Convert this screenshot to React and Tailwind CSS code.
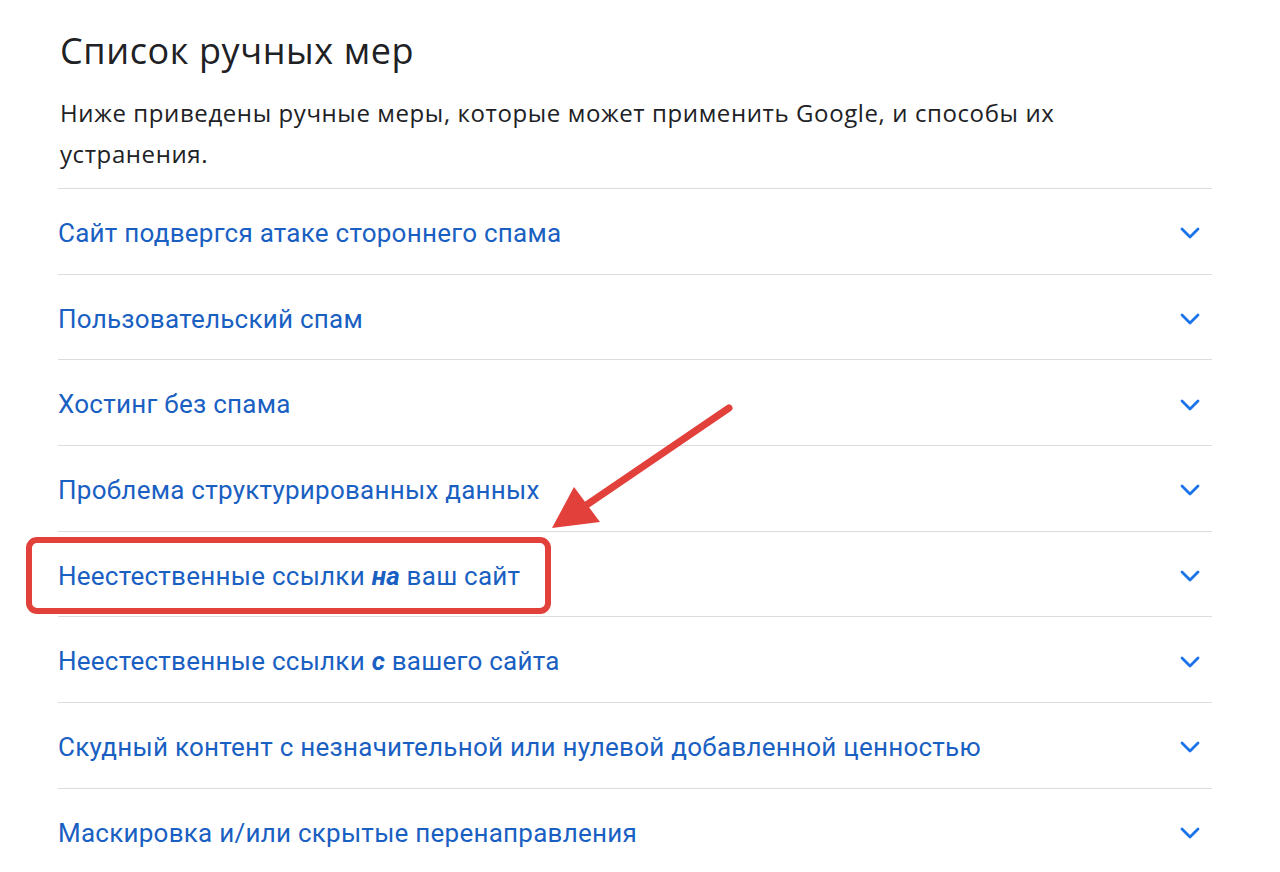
import React from "react";

const items = [
  ["Сайт подвергся атаке стороннего спама"],
  ["Пользовательский спам"],
  ["Хостинг без спама"],
  ["Проблема структурированных данных"],
  ["Неестественные ссылки ", "на", " ваш сайт"],
  ["Неестественные ссылки ", "с", " вашего сайта"],
  ["Скудный контент с незначительной или нулевой добавленной ценностью"],
  ["Маскировка и/или скрытые перенаправления"],
];

function Chevron() {
  return (
    <svg width="20" height="12" viewBox="0 0 20 12" fill="none">
      <path d="M2 2 L10 10 L18 2" stroke="#1a73e8" strokeWidth="2.8" strokeLinecap="round" strokeLinejoin="round" />
    </svg>
  );
}

export default function App() {
  return (
    <div className="relative w-[1280px] h-[872px] bg-white overflow-hidden">
      <div className="pl-[58px] w-[1212px] pt-[26px]">
        <h1 className="pl-[2px] text-[36px] leading-[50px] tracking-[0.6px] text-[#202124]" style={{ fontFamily: '"Open Sans", sans-serif' }}>
          Список ручных мер
        </h1>
        <p className="pl-[2px] mt-[16px] max-w-[1080px] text-[24px] leading-[41px] tracking-[0.6px] text-[#202124]" style={{ fontFamily: '"Open Sans", sans-serif' }}>
          Ниже приведены ручные меры, которые может применить Google, и способы их устранения.
        </p>
        <div className="mt-[14px] border-t border-[#dadce0]">
          {items.map((parts, i) => (
            <div key={i} className="flex items-center justify-between h-[85.7px] pt-[4px] border-b border-[#dadce0]" style={{ fontFamily: 'Roboto, sans-serif' }}>
              <span className="text-[26px] tracking-[0.25px] text-[#1a5fc2]">
                {parts[0]}
                {parts[1] && <b className="italic font-bold">{parts[1]}</b>}
                {parts[2]}
              </span>
              <span className="mr-[12px]"><Chevron /></span>
            </div>
          ))}
        </div>
      </div>
      <div className="absolute left-[26px] top-[537px] w-[525px] h-[77px] border-[6px] border-[#e2403a] rounded-[11px]" />
      <svg className="absolute left-0 top-0" width="1280" height="872" viewBox="0 0 1280 872" fill="none">
        <line x1="729" y1="408" x2="585" y2="506" stroke="#e2403a" strokeWidth="7" strokeLinecap="round" />
        <polygon points="552,528 574,487 600,522" fill="#e2403a" />
      </svg>
    </div>
  );
}
